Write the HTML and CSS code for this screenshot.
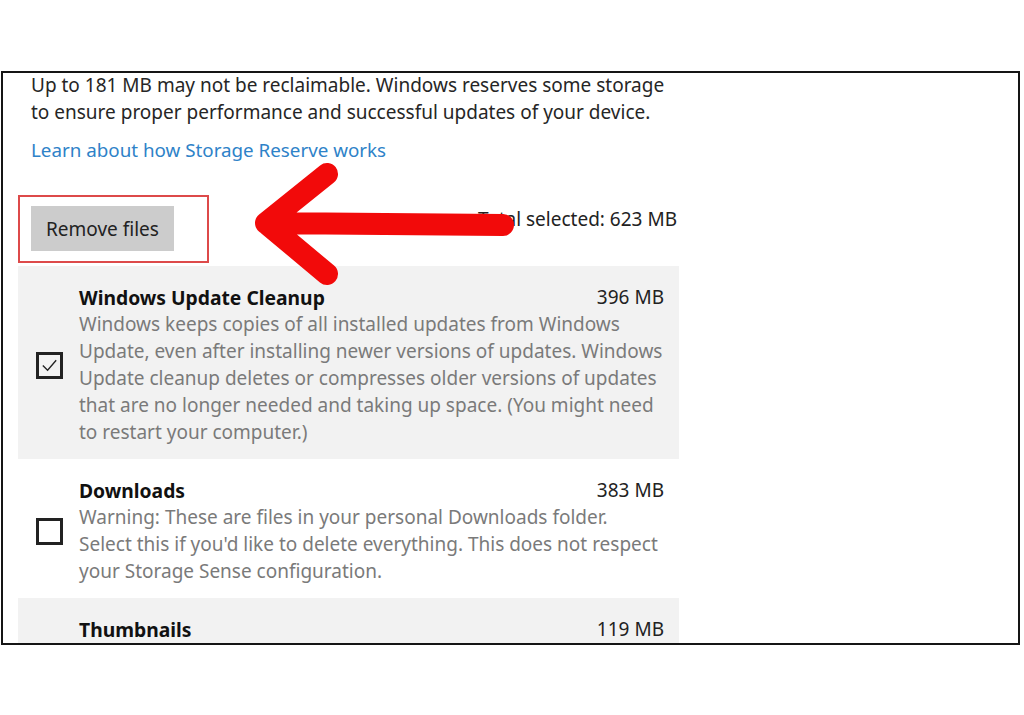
FILE: index.html
```html
<!DOCTYPE html>
<html lang="en">
<head>
    <meta charset="UTF-8">
    <title>Temporary files</title>
    <link rel="stylesheet" href="styles.css">
</head>
<body>
    <div class="frame">
        <div class="content">
            <p class="intro">Up to 181 MB may not be reclaimable. Windows reserves some storage<br>to ensure proper performance and successful updates of your device.</p>
            <a class="link" href="#">Learn about how Storage Reserve works</a>

            <div class="actions">
                <div class="highlight">
                    <button class="remove">Remove files</button>
                </div>
                <span class="total">Total selected: 623 MB</span>
            </div>

            <div class="item shaded">
                <span class="check">
                    <svg viewBox="0 0 22 22" width="22" height="22"><path d="M4 11.5 L9 16.5 L18 6" fill="none" stroke="#222" stroke-width="1.4"/></svg>
                </span>
                <div class="item-body">
                    <div class="item-head">
                        <span class="item-title">Windows Update Cleanup</span>
                        <span class="item-size">396 MB</span>
                    </div>
                    <p class="item-desc">Windows keeps copies of all installed updates from Windows<br>Update, even after installing newer versions of updates. Windows<br>Update cleanup deletes or compresses older versions of updates<br>that are no longer needed and taking up space. (You might need<br>to restart your computer.)</p>
                </div>
            </div>

            <div class="item">
                <span class="check"></span>
                <div class="item-body">
                    <div class="item-head">
                        <span class="item-title">Downloads</span>
                        <span class="item-size">383 MB</span>
                    </div>
                    <p class="item-desc">Warning: These are files in your personal Downloads folder.<br>Select this if you'd like to delete everything. This does not respect<br>your Storage Sense configuration.</p>
                </div>
            </div>

            <!-- last row runs past the bottom edge of the frame -->
            <div class="item shaded partial">
                <span class="check"></span>
                <div class="item-body">
                    <div class="item-head">
                        <span class="item-title">Thumbnails</span>
                        <span class="item-size">119 MB</span>
                    </div>
                </div>
            </div>
        </div>
    </div>

    <!-- red arrow pointing at the button -->
    <svg class="arrow" width="1024" height="715" viewBox="0 0 1024 715">
        <path d="M503 225 L266 223 M327 174 L266 223 L327 274" fill="none" stroke="#f20a0a" stroke-width="22" stroke-linecap="round" stroke-linejoin="round"/>
    </svg>
</body>
</html>
```

FILE: styles.css
```css
body {
    margin: 0;
    background: #fff;
    font-family: "Noto Sans", "Open Sans", sans-serif;
    color: #222;
    position: relative;
    width: 1024px;
    height: 715px;
    overflow: hidden;
}

.frame {
    margin: 71px 0 0 1px;
    width: 1019px;
    height: 574px;
    box-sizing: border-box;
    border: 2px solid #151515;
    overflow: hidden;
}

.content {
    width: 661px;
    margin-left: 15px;
}

.intro {
    margin: -1px 0 0;
    padding-left: 13px;
    font-size: 19px;
    line-height: 27px;
    color: #262626;
}

.link {
    display: block;
    margin: 11px 0 0 13px;
    font-size: 18.8px;
    line-height: 27px;
    color: #2e82c8;
    text-decoration: none;
}

.actions {
    display: flex;
    justify-content: space-between;
    align-items: center;
    margin-top: 31px;
}

.highlight {
    width: 191px;
    height: 68px;
    box-sizing: border-box;
    border: 2px solid #dd4a4a;
    padding: 9px 0 0 11px;
}

.remove {
    width: 143px;
    height: 45px;
    border: none;
    background: #cccccc;
    font-family: inherit;
    font-size: 19px;
    color: #222;
    padding: 0;
}

.total {
    font-size: 19px;
    color: #222;
    margin-right: 2px;
    margin-top: -20px;
}

.item {
    display: flex;
    align-items: center;
    padding: 18px 15px 13px 18px;
    margin-top: 3px;
}

.item + .item {
    margin-top: 0;
}

.shaded {
    background: #f2f2f2;
}

.partial {
    align-items: flex-start;
    min-height: 80px;
}

.partial .check {
    margin-top: 60px;
}

.check {
    width: 27px;
    height: 27px;
    box-sizing: border-box;
    border: 3px solid #222;
    flex: none;
    display: flex;
    align-items: center;
    justify-content: center;
}

.item-body {
    flex: 1;
    margin-left: 16px;
}

.item-head {
    display: flex;
    justify-content: space-between;
    line-height: 27px;
}

.item-title {
    font-size: 19.3px;
    font-weight: bold;
    color: #111;
}

.item-size {
    font-size: 19px;
    color: #222;
}

.item-desc {
    margin: 0;
    font-size: 19px;
    line-height: 27px;
    color: #7a7a7a;
    white-space: nowrap;
}

.arrow {
    position: absolute;
    top: 0;
    left: 0;
    pointer-events: none;
}
```
